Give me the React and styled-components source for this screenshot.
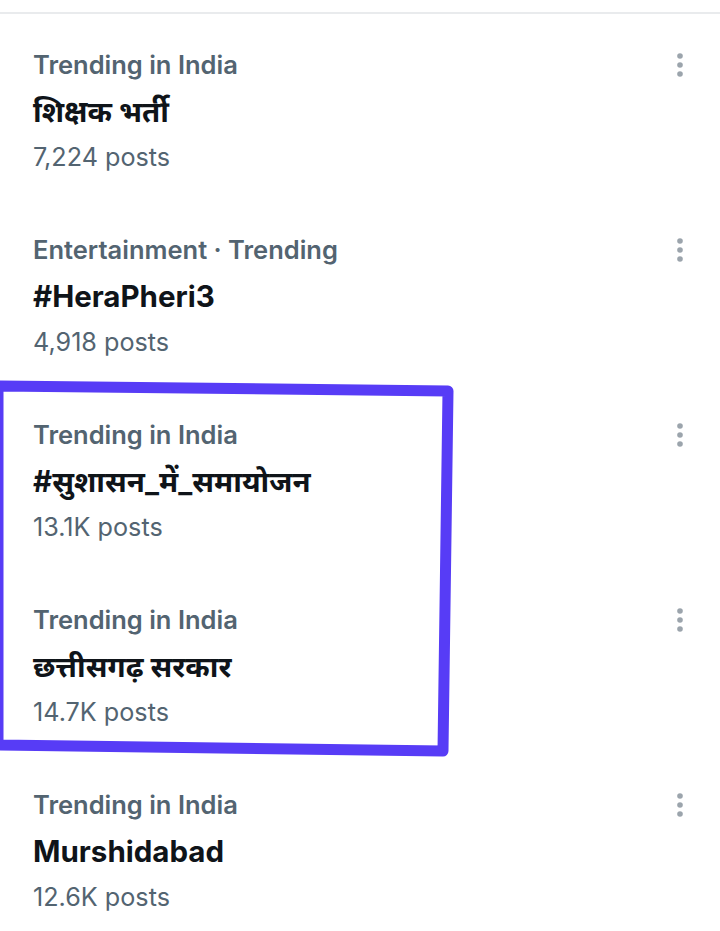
import React from 'react';
import styled, { createGlobalStyle } from 'styled-components';

const GlobalStyle = createGlobalStyle`
    body {
        margin: 0;
        background: #ffffff;
        font-family: Inter, "Noto Sans", "DejaVu Sans", sans-serif;
    }
`

const Page = styled.div`
    position: relative;
    width: 720px;
    min-height: 931px;
    padding-top: 12px;
    box-sizing: border-box;
    overflow: hidden;
`

const List = styled.ul`
    list-style: none;
    margin: 0;
    padding: 0;
    border-top: 2px solid #e9ebed;
`

const Row = styled.li`
    display: grid;
    grid-template-columns: 1fr 40px;
    height: 185px;
    box-sizing: border-box;
    padding: 28px 20px 0 33px;
`

const Info = styled.div`
    display: flex;
    flex-direction: column;
`

const Label = styled.span`
    font-size: 25.5px;
    line-height: 46px;
    font-weight: 600;
    color: #536471;
`

const Title = styled.span`
    font-size: 29.5px;
    line-height: 46px;
    font-weight: 700;
    color: #0f1419;
`

const Count = styled.span`
    font-size: 25.2px;
    line-height: 46px;
    font-weight: 400;
    color: #536471;
`

const Menu = styled.div`
    height: 46px;
    display: grid;
    place-items: center;
`

const Highlight = styled.svg`
    position: absolute;
    left: 0;
    top: 0;
    pointer-events: none;
`

const trends = [
    { label: 'Trending in India', title: 'शिक्षक भर्ती', count: '7,224 posts' },
    { label: 'Entertainment · Trending', title: '#HeraPheri3', count: '4,918 posts' },
    { label: 'Trending in India', title: '#सुशासन_में_समायोजन', count: '13.1K posts' },
    { label: 'Trending in India', title: 'छत्तीसगढ़ सरकार', count: '14.7K posts' },
    { label: 'Trending in India', title: 'Murshidabad', count: '12.6K posts' },
]

function Dots() {
    return (
        <svg width="8" height="26" viewBox="0 0 8 26">
            <circle cx="4" cy="4" r="2.8" fill="#9ba4ac" />
            <circle cx="4" cy="13" r="2.8" fill="#9ba4ac" />
            <circle cx="4" cy="22" r="2.8" fill="#9ba4ac" />
        </svg>
    )
}

export default function App() {
    return (
        <Page>
            <GlobalStyle />
            <List>
                {trends.map((t, i) => (
                    <Row key={i}>
                        <Info>
                            <Label>{t.label}</Label>
                            <Title>{t.title}</Title>
                            <Count>{t.count}</Count>
                        </Info>
                        <Menu><Dots /></Menu>
                    </Row>
                ))}
            </List>
            <Highlight width="720" height="931" viewBox="0 0 720 931">
                <polygon
                    points="-2,386 448,391 443,751 -2,745"
                    fill="none"
                    stroke="#573cf6"
                    strokeWidth="11"
                    strokeLinejoin="round"
                />
            </Highlight>
        </Page>
    );
}
